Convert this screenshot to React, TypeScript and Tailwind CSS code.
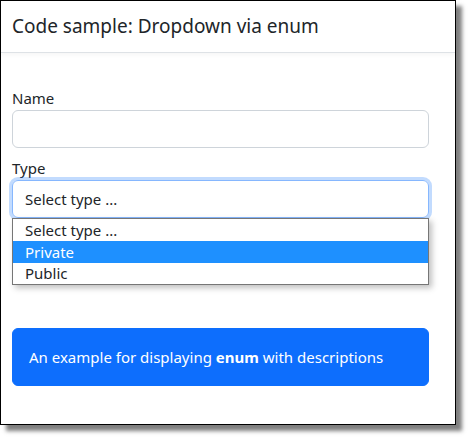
export default function App() {
  return (
    <div className="h-[440px] w-[471px] bg-white" style={{ fontFamily: '"Noto Sans", "Open Sans", sans-serif' }}>
      <div className="h-[425px] w-[456px] border border-black bg-white text-[#212529] shadow-[6px_6px_4px_rgba(0,0,0,0.5)]">
        {/* Header */}
        <div className="flex h-[52px] items-center border-b border-[#dee2e6] px-[11px] text-[19px] shadow-[0_2px_4px_rgba(0,0,0,0.04)]">
          Code sample: Dropdown via enum
        </div>

        {/* Body */}
        <div className="pl-[11px] pr-[26px] pt-[33px] text-[15px]">
          <label className="block leading-6">Name</label>
          <div className="h-[38px] rounded-md border border-[#ced4da] bg-white" />

          <label className="mt-2 block leading-6">Type</label>
          <div className="relative">
            <div className="flex h-[38px] items-center rounded-md border border-[#86b7fe] px-3 shadow-[0_0_0_3px_rgba(13,110,253,0.25)]">
              Select type ...
            </div>
            {/* Open dropdown list */}
            <ul className="absolute left-0 right-0 top-[38px] z-10 border border-[#767676] bg-white shadow-[3px_3px_6px_rgba(0,0,0,0.25)]">
              <li className="h-[22px] px-3 leading-[22px]">Select type ...</li>
              <li className="h-[22px] bg-[#1e90ff] px-3 leading-[22px] text-white">Private</li>
              <li className="h-[21px] px-3 leading-[21px]">Public</li>
            </ul>
          </div>

          <div className="mt-[110px] rounded-md border border-[#0d6efd] bg-[#0d6efd] p-4 leading-6 text-white">
            An example for displaying <b>enum</b> with descriptions
          </div>
        </div>
      </div>
    </div>
  )
}
